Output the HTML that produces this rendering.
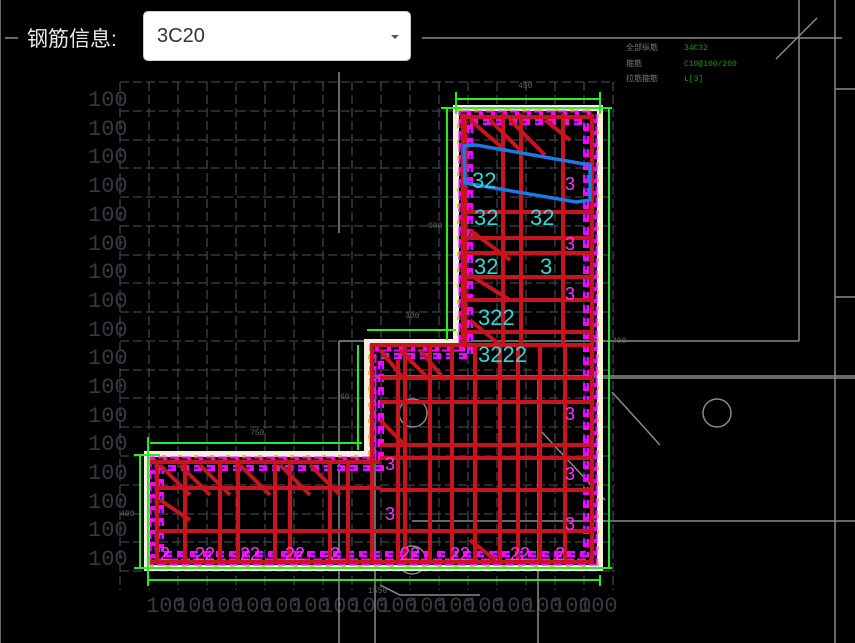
<!DOCTYPE html>
<html><head><meta charset="utf-8"><style>
html,body{margin:0;padding:0;background:#000;width:855px;height:643px;overflow:hidden}
.lab{position:absolute;left:27px;top:23px;color:#e8e8e8;font:21px "Liberation Sans","Noto Sans CJK SC",sans-serif}
.sel{position:absolute;left:143px;top:11px;width:268px;height:50px;background:#fff;border:1px solid #ccc;border-radius:5px;box-sizing:border-box}
.sel span{position:absolute;left:13px;top:13px;font:20px "Liberation Sans",sans-serif;color:#333}
.sel i{position:absolute;right:11px;top:23px;width:0;height:0;border-left:4px solid transparent;border-right:4px solid transparent;border-top:4px solid #555}
svg{position:absolute;left:0;top:0}
</style></head><body>
<svg width="855" height="643" viewBox="0 0 855 643" font-family="Liberation Mono, monospace">
<g stroke="#3c444c" stroke-width="1.3" stroke-dasharray="9 4" fill="none">
<path d="M120 82H615M120 111H615M120 140H615M120 168H615M120 197H615M120 226H615M120 255H615M120 283H615M120 312H615M120 341H615M120 370H615M120 398H615M120 427H615M120 456H615M120 485H615M120 514H615M120 542H615M120 571H615"/>
<path d="M120 82V590M149 82V590M178 82V590M207 82V590M236 82V590M265 82V590M294 82V590M323 82V590M352 82V590M381 82V590M410 82V590M439 82V590M468 82V590M497 82V590M526 82V590M555 82V590M584 82V590M613 82V590"/>
</g>
<g fill="#343a42" font-size="22">
<text x="88" y="106">100</text><text x="88" y="135">100</text><text x="88" y="163">100</text><text x="88" y="192">100</text><text x="88" y="221">100</text><text x="88" y="250">100</text><text x="88" y="278">100</text><text x="88" y="307">100</text><text x="88" y="336">100</text><text x="88" y="364">100</text><text x="88" y="393">100</text><text x="88" y="422">100</text><text x="88" y="450">100</text><text x="88" y="479">100</text><text x="88" y="508">100</text><text x="88" y="536">100</text><text x="88" y="565">100</text>
<text x="146" y="612">100</text><text x="175" y="612">100</text><text x="204" y="612">100</text><text x="233" y="612">100</text><text x="262" y="612">100</text><text x="291" y="612">100</text><text x="320" y="612">100</text><text x="349" y="612">100</text><text x="378" y="612">100</text><text x="407" y="612">100</text><text x="436" y="612">100</text><text x="465" y="612">100</text><text x="494" y="612">100</text><text x="523" y="612">100</text><text x="552" y="612">100</text><text x="578" y="612">100</text>
</g>
<g stroke="#8a8a8a" stroke-width="1.5" fill="none">
<path d="M0 0V643M5 38H18M422 38H842M799 0V341M835 0V643M835 89H855M835 297H855M776 59L817 18"/>
<path d="M339 72V233M339 341V643M339 341H799M375 378V643M375 378H855M538 378V643M370 376H855M412 521H855M612 392L660 445M540 430L605 500"/>
<circle cx="413" cy="413" r="14"/><circle cx="717" cy="413" r="14"/><circle cx="412" cy="560" r="14"/>
<path d="M380 585L400 595H480"/>
</g>
<g font-size="8"><g fill="#777"><text x="626" y="50">全部纵筋</text><text x="626" y="66">箍筋</text><text x="626" y="81">拉筋箍筋</text></g>
<g fill="#1a9a1a"><text x="684" y="50">34C32</text><text x="684" y="66">C10@100/200</text><text x="684" y="81">L[3]</text></g>
<g fill="#666"><text x="518" y="88">450</text><text x="428" y="228">600</text><text x="405" y="318">300</text><text x="250" y="435">750</text><text x="340" y="399">60</text><text x="120" y="516">400</text><text x="612" y="343">400</text><text x="368" y="593">1550</text></g></g>
<!-- outline -->
<path d="M456 108H600V568H147V454H367V342H456Z" fill="none" stroke="#f2eee0" stroke-width="6"/>
<path d="M462 114H594V562H153V460H373V348H462Z" fill="none" stroke="#ff00ff" stroke-width="7" stroke-dasharray="9 3"/>
<path d="M462 114H594V562H153V460H373V348H462Z" fill="none" stroke="#000" stroke-width="3" stroke-dasharray="5 7"/>
<path d="M470 122H586V554H161V468H381V356H470Z" fill="none" stroke="#ff00ff" stroke-width="6" stroke-dasharray="8 5"/>
<path d="M470 122H586V554H161V468H381V356H470Z" fill="none" stroke="#2020c0" stroke-width="2" stroke-dasharray="4 9"/>
<path d="M458 110H598V566H149V456H369V344H458Z" fill="none" stroke="#e8c020" stroke-width="2" stroke-dasharray="4 12"/>
<!-- red rebar -->
<g stroke="#c8141e" stroke-width="4" fill="none">
<path d="M463 114V345M503 114V345M521 114V345M563 114V345M592 114V562M465 114V345"/>
<path d="M460 117H594M465 212H594M465 238H594M465 253H594M465 277H594M465 300H594M465 332H594"/>
<path d="M372 345V562M398 360V562M405 345V562M430 345V562M452 345V562M475 345V562M500 345V562M518 345V562M540 345V562M565 345V562"/>
<path d="M370 345H594M380 378H594M380 402H594M380 445H594M380 458H594M380 490H594M380 531H594M150 562H594"/>
<path d="M150 462H380M155 488H380M155 531H380M157 460V562M185 460V562M220 460V562M238 460V562M275 460V562M290 460V562M330 460V562M348 460V562"/>
<path d="M470 120L505 150M490 120L520 150M510 120L545 155M545 120L570 140M470 230L510 260M470 275L510 300M470 320L500 345M380 350L405 380M400 350L430 380M420 350L445 380M380 420L405 445M160 465L190 495M180 465L210 495M200 465L230 495M240 465L270 495M280 465L310 495M310 465L340 495M160 500L190 520M470 540L495 560"/>
</g>
<path d="M464 146L476 145L590 165L590 200L576 202L465 183Z" fill="none" stroke="#1a7ae8" stroke-width="3.5"/>
<g fill="#30d8d8" font-size="22" font-family="Liberation Sans, sans-serif"><text x="472" y="188">32</text><text x="474" y="225">32</text><text x="530" y="225">32</text><text x="474" y="274">32</text><text x="540" y="274">3</text><text x="478" y="325">322</text><text x="478" y="362">3222</text></g>
<g fill="#ff30ff" font-size="18" font-family="Liberation Sans, sans-serif"><text x="160" y="560">2</text><text x="195" y="560">22</text><text x="240" y="560">22</text><text x="285" y="560">22</text><text x="330" y="560">2</text><text x="400" y="560">22</text><text x="450" y="560">22</text><text x="510" y="560">22</text><text x="555" y="560">2</text><text x="565" y="190">3</text><text x="565" y="300">3</text><text x="565" y="420">3</text><text x="565" y="480">3</text><text x="385" y="520">3</text><text x="565" y="250">3</text><text x="565" y="530">3</text><text x="385" y="470">3</text></g>
<!-- green dims -->
<g stroke="#22ee22" stroke-width="2" fill="none">
<path d="M456 99H600M447 108V340M609 108V568M148 580H600M140 455V568M150 443H362M358 345V450M367 330H456M456 92V114M600 92V114M441 108H612M134 568H612M134 455H160M148 437V586M600 575V586"/>
</g>
</svg>
<div class="lab">钢筋信息:</div>
<div class="sel"><span>3C20</span><i></i></div>
</body></html>
